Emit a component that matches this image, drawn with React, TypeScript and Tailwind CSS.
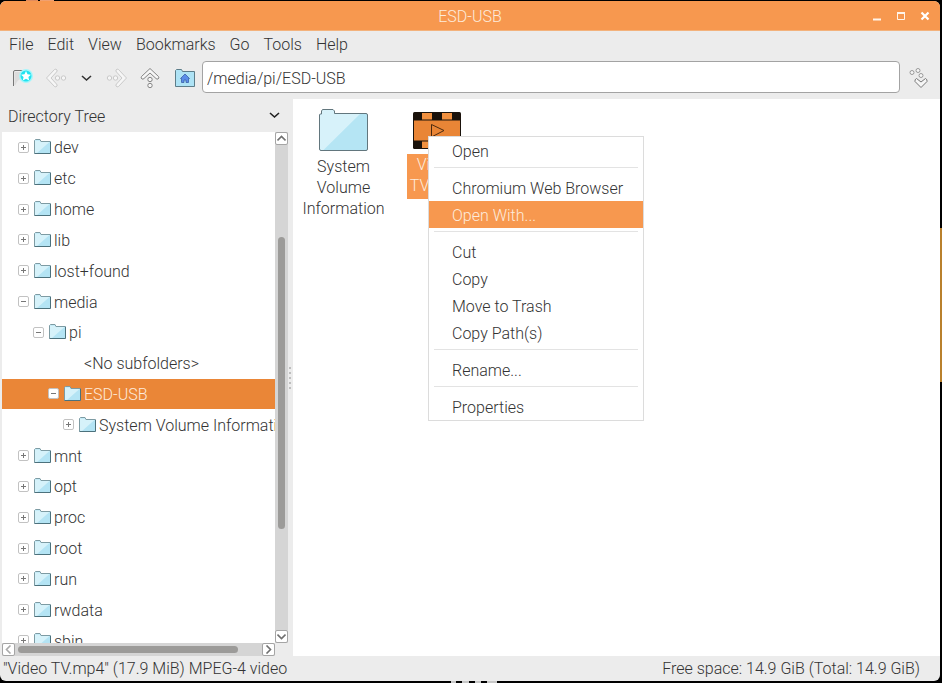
import clsx from 'clsx';
import { useState } from 'react';

type TreeItem = {
  label: string;
  level: number;
  state?: 'open' | 'closed';
};

const tree: TreeItem[] = [
  { label: 'dev', level: 0, state: 'closed' },
  { label: 'etc', level: 0, state: 'closed' },
  { label: 'home', level: 0, state: 'closed' },
  { label: 'lib', level: 0, state: 'closed' },
  { label: 'lost+found', level: 0, state: 'closed' },
  { label: 'media', level: 0, state: 'open' },
  { label: 'pi', level: 1, state: 'open' },
  { label: '<No subfolders>', level: 2 },
  { label: 'ESD-USB', level: 2, state: 'open' },
  { label: 'System Volume Information', level: 3, state: 'closed' },
  { label: 'mnt', level: 0, state: 'closed' },
  { label: 'opt', level: 0, state: 'closed' },
  { label: 'proc', level: 0, state: 'closed' },
  { label: 'root', level: 0, state: 'closed' },
  { label: 'run', level: 0, state: 'closed' },
  { label: 'rwdata', level: 0, state: 'closed' },
  { label: 'sbin', level: 0, state: 'closed' },
];

const indents = ['pl-4', 'pl-[31px]', 'pl-[46px]', 'pl-[61px]'];

const menuGroups = [
  ['Open'],
  ['Chromium Web Browser', 'Open With...'],
  ['Cut', 'Copy', 'Move to Trash', 'Copy Path(s)'],
  ['Rename...'],
  ['Properties'],
];

function SmallFolder() {
  return (
    <svg className="h-4 w-[17px] shrink-0" viewBox="0 0 17 16" fill="none">
      <path d="M.5 14.5V1.5L1.500.5H6L7 2.500H16.500V14.500Z" fill="#b4e4f4" />
      <path d="M1 14V1.500H6L7 3H15.500L3 14Z" fill="#d6f2fa" />
      <path d="M.5 14.500V1.500L1.500.5H6L7 2.500H16" stroke="#7d9ba3" />
      <path d="M16.500 2.500V14.500H.5" stroke="#4c717c" />
    </svg>
  );
}

function BigFolder() {
  return (
    <svg className="h-[43px] w-[49px]" viewBox="0 0 49 43" fill="none">
      <path
        d="M.5 40V6Q.5 5 1.500 5H2.500V2L3.500.5H14L15.500 2V4.500H47Q48.500 4.500 48.500 6V40Q48.500 41.500 47 41.500H2Q.5 41.500.5 40Z"
        fill="#b5e5f4"
      />
      <path d="M1 41V6L3 4.500V1H14.500L15.500 5H41L4 41.500Z" fill="#d7f2fa" />
      <path
        d="M.5 40V6Q.5 5 1.500 5H2.500V2L3.500.5H14L15.500 2V4.500H47Q48.500 4.500 48.500 6V40Q48.500 41.500 47 41.500H2Q.5 41.500.5 40Z"
        stroke="#62767d"
      />
    </svg>
  );
}

function FilmIcon() {
  return (
    <svg className="h-[38px] w-12" viewBox="0 0 48 38" fill="none">
      <rect width="48" height="37" rx="1.500" fill="#1a120b" />
      <path d="M1 8.500H47V28.500H1Z" fill="#e98536" />
      <path d="M9 1H19V7.500H9ZM29 1H39V7.500H29ZM9 29.500H19V36H9ZM29 29.500H39V36H29Z" fill="#f0903f" />
      <path d="M18.500 12.500V25L31 18.500Z" stroke="#4b2a10" />
    </svg>
  );
}

function Expander({ open }: { open: boolean }) {
  return (
    <svg className="h-[11px] w-[11px] shrink-0" viewBox="0 0 11 11" fill="none">
      <rect x=".5" y=".5" width="10" height="10" rx="1.500" fill="#fff" stroke="#c2c2c2" />
      <path d={open ? 'M3 5.500H8' : 'M3 5.500H8M5.500 3V8'} stroke="#777" />
    </svg>
  );
}

function Chevron({ className }: { className?: string }) {
  return (
    <svg className={clsx('h-[7px] w-[11px]', className)} viewBox="0 0 11 7" fill="none">
      <path d="M1 1L5.500 5L10 1" stroke="currentColor" strokeWidth="1.600" />
    </svg>
  );
}

function ScrollButton({ label, turn, dim }: { label: string; turn: string; dim?: boolean }) {
  return (
    <button
      aria-label={label}
      className="flex h-[13px] w-[13px] shrink-0 items-center justify-center rounded-xs border border-[#a5a5a5] bg-white"
    >
      <svg className={clsx('h-[9px] w-[9px]', turn)} viewBox="0 0 9 9" fill="none">
        <path d="M.5 6.500L4.500 2.500L8.500 6.500" stroke={dim ? '#aaa' : '#707070'} strokeWidth="1.600" />
      </svg>
    </button>
  );
}

function DottedArrow({ className }: { className?: string }) {
  return (
    <svg className={clsx('h-[22px] w-[22px]', className)} viewBox="0 0 22 22" fill="none" stroke="currentColor">
      <path
        d="M11 1.500L19.500 9.500Q20.500 11 19 12Q18 12.500 17 11.500L11 6L5 11.500Q4 12.500 3 12Q1.500 11 2.500 9.500Z"
        fill="#f6f6f6"
        strokeLinejoin="round"
      />
      <circle cx="11" cy="12.500" r="2.200" fill="#f6f6f6" />
      <circle cx="11" cy="18.500" r="2.200" fill="#f6f6f6" />
    </svg>
  );
}

function TitleBar() {
  return (
    <header className="flex h-[30px] items-center border-b border-[#f3b27c] bg-[#f7984f] pr-2.5 text-[#fdebdc]">
      <span className="w-[70px]" />
      <h1 className="flex-1 pt-0.5 text-center">ESD-USB</h1>
      <div className="flex w-[60px] items-center justify-end gap-[14px]">
        <button aria-label="Minimize">
          <svg className="h-[10px] w-[10px]" viewBox="0 0 10 10">
            <path d="M1 8.500H9" stroke="#fff4ea" strokeWidth="2" />
          </svg>
        </button>
        <button aria-label="Maximize">
          <svg className="h-[10px] w-[10px]" viewBox="0 0 10 10" fill="none" stroke="#fff4ea">
            <path d="M1.500 1V8.500H8.500V1" />
            <path d="M1 2H9" strokeWidth="2" />
          </svg>
        </button>
        <button aria-label="Close">
          <svg className="h-[10px] w-[10px]" viewBox="0 0 10 10">
            <path d="M1.500 1.500L8.500 8.500M8.500 1.500L1.500 8.500" stroke="#fff" strokeWidth="2.200" />
          </svg>
        </button>
      </div>
    </header>
  );
}

function MenuBar() {
  return (
    <nav className="flex h-[30px] items-center gap-[14px] pb-0.5 pl-[9px]">
      {['File', 'Edit', 'View', 'Bookmarks', 'Go', 'Tools', 'Help'].map((item) => (
        <button key={item}>{item}</button>
      ))}
    </nav>
  );
}

function Toolbar() {
  const [path, setPath] = useState('/media/pi/ESD-USB');
  return (
    <div className="flex h-[38px] items-start pl-3 pr-[9px]">
      <div className="flex h-8 w-[190px] shrink-0 items-center pt-0.5">
        <button aria-label="New tab">
          <svg className="h-[22px] w-[22px]" viewBox="0 0 22 22" fill="none">
            <path d="M1.500 19V5Q1.500 3.500 3 3.500H12" stroke="#777" />
            <path d="M2.500 18V5H12V11Q5 12 3.500 18Z" fill="#dcdcdc" />
            <circle cx="14" cy="9" r="7" fill="#a5f6fb" />
            <circle cx="14" cy="9" r="5.500" fill="#22e3f0" />
            <path d="M14 4L15.500 7.300L19 7.700L16.400 10L17.200 13.500L14 11.800L10.800 13.500L11.600 10L9 7.700L12.500 7.300Z" fill="#fff" />
          </svg>
        </button>
        <button aria-label="Back" className="ml-[11px]">
          <DottedArrow className="-rotate-90 text-[#c9c9c9]" />
        </button>
        <button aria-label="History" className="ml-[14px]">
          <Chevron className="text-[#333]" />
        </button>
        <button aria-label="Forward" className="ml-[14px]">
          <DottedArrow className="rotate-90 text-[#c9c9c9]" />
        </button>
        <button aria-label="Up" className="ml-[11px]">
          <DottedArrow className="text-[#858585]" />
        </button>
        <button aria-label="Home" className="ml-[14px]">
          <svg className="h-[18px] w-5" viewBox="0 0 20 18" fill="none">
            <path d="M.5 17.500V1.500L1.500.5H6.500L7.500 2.500H19.500V17.500Z" fill="#aee3f5" stroke="#5d7d89" />
            <path
              d="M10 5L5.500 9.500H6.500V13.500H9V11H11V13.500H13.500V9.500H14.500Z"
              fill="#5a8de8"
              stroke="#3a5fa8"
              strokeWidth=".8"
            />
          </svg>
        </button>
      </div>
      <input
        aria-label="Location"
        value={path}
        onChange={(e) => setPath(e.target.value)}
        className="h-8 min-w-0 flex-1 rounded-sm border border-[#a3a3a3] bg-white px-1 pt-0.5 outline-none"
      />
      <button aria-label="Go to location" className="ml-[9px] flex h-8 items-center pt-0.5">
        <svg className="h-[22px] w-[22px]" viewBox="0 0 22 22" fill="none" stroke="#999">
          <circle cx="3" cy="5.500" r="2" fill="#f6f6f6" />
          <circle cx="9" cy="3.500" r="2" fill="#f6f6f6" />
          <circle cx="12" cy="8.500" r="2" fill="#f6f6f6" />
          <path
            d="M12 20.500L6 14.500Q5.500 12.500 7.500 11.500L12 15L16.500 11.500Q18.500 12.500 18 14.500Z"
            fill="#f6f6f6"
            stroke="#777"
          />
        </svg>
      </button>
    </div>
  );
}

function DirectoryTree() {
  const [selected, setSelected] = useState('ESD-USB');
  return (
    <aside className="flex w-[287px] shrink-0 flex-col">
      <button className="flex h-[33px] shrink-0 items-center justify-between pl-[7px] pr-2">
        <span className="pt-0.5">Directory Tree</span>
        <Chevron className="text-[#222]" />
      </button>
      <div className="flex min-h-0 flex-1 pl-px">
        <div className="flex min-w-0 flex-1 flex-col">
          <div className="min-h-0 flex-1 overflow-hidden bg-white">
            <ul className="grid h-[524px] auto-rows-fr">
              {tree.map((item) => (
                <li key={item.label}>
                  <button
                    onClick={() => setSelected(item.label)}
                    className={clsx(
                      'flex h-full w-full items-center whitespace-nowrap',
                      indents[item.level],
                      selected === item.label && 'bg-[#ea8637] text-[#fdeadb]'
                    )}
                  >
                    {item.state ? (
                      <>
                        <Expander open={item.state === 'open'} />
                        <span className="ml-[5px] mr-[3px]">
                          <SmallFolder />
                        </span>
                      </>
                    ) : (
                      <span className="w-9 shrink-0" />
                    )}
                    <span className="pt-0.5">{item.label}</span>
                  </button>
                </li>
              ))}
            </ul>
          </div>
          <div className="flex h-[13px] shrink-0 items-center bg-[#d5d5d5]">
            <ScrollButton label="Scroll left" turn="-rotate-90" dim />
            <div className="ml-[3px] h-[7px] w-[220px] rounded-full bg-[#9c9b99]" />
            <span className="flex-1" />
            <ScrollButton label="Scroll right" turn="rotate-90" />
          </div>
        </div>
        <div className="mb-[13px] flex w-[13px] flex-col items-center bg-[#d5d5d5]">
          <ScrollButton label="Scroll up" turn="rotate-0" />
          <div className="mt-[92px] h-[292px] w-[7px] rounded-full bg-[#9c9b99]" />
          <span className="flex-1" />
          <ScrollButton label="Scroll down" turn="rotate-180" />
        </div>
      </div>
    </aside>
  );
}

function Divider() {
  return (
    <div className="flex w-[5px] shrink-0 flex-col items-center justify-center gap-[3px] pr-px">
      {[0, 1, 2, 3, 4].map((dot) => (
        <span key={dot} className="h-[2px] w-[2px] bg-[#bdbdbd]" />
      ))}
    </div>
  );
}

function FilePane() {
  return (
    <main className="flex flex-1 items-start bg-white pl-1 pt-2.5 text-center leading-[21px]">
      <button className="flex w-[93px] flex-col items-center gap-1">
        <BigFolder />
        <span>
          System
          <br />
          Volume
          <br />
          Information
        </span>
      </button>
      <button className="flex w-[93px] flex-col items-center gap-1 pt-[3px]">
        <FilmIcon />
        <span className="bg-[#f7984f] px-[3px] pb-[3px] text-[#fdebdc]">
          Video
          <br />
          TV.mp4
        </span>
      </button>
    </main>
  );
}

function ContextMenu() {
  return (
    <div
      role="menu"
      className="absolute left-[428px] top-[136px] w-[216px] border border-[#dcdcdc] bg-white"
    >
      {menuGroups.map((group, index) => (
        <div key={group[0]}>
          {index > 0 && <div className="mx-[5px] mb-1.5 mt-[3px] h-px bg-[#e3e3e3]" />}
          {group.map((item) => (
            <button
              key={item}
              role="menuitem"
              className={clsx(
                'flex h-[27px] w-full items-center pl-[23px] pt-0.5',
                item === 'Open With...' && 'bg-[#f7984f] text-[#fdebdc]'
              )}
            >
              {item}
            </button>
          ))}
        </div>
      ))}
    </div>
  );
}

// bits of the desktop that stay visible around the window
function Desktop() {
  return (
    <div aria-hidden="true">
      <div className="absolute left-[26px] top-0 h-px w-3 bg-[#e08a5c]" />
      <div className="absolute left-10 top-0 h-px w-[14px] bg-[#f0a070]" />
      <div className="absolute right-0 top-[228px] h-[154px] w-[2px] bg-[#b9802c]" />
      <div className="absolute bottom-0 left-[451px] flex h-[2px] gap-[6px]">
        <span className="w-[5px] bg-[#c8c8c8]" />
        <span className="w-[7px] bg-[#c8c8c8]" />
        <span className="w-[6px] bg-[#c8c8c8]" />
        <span className="w-[10px] bg-[#c8c8c8]" />
      </div>
    </div>
  );
}

export default function App() {
  return (
    <div className="relative flex h-screen flex-col bg-black pb-[2px] pr-[2px] pt-px font-['Roboto',sans-serif] text-base font-light text-[#333]">
      <Desktop />
      <div className="flex min-h-0 flex-1 flex-col overflow-hidden rounded-md bg-[#ececec]">
        <TitleBar />
        <MenuBar />
        <Toolbar />
        <div className="flex min-h-0 flex-1 pl-px">
          <DirectoryTree />
          <Divider />
          <FilePane />
        </div>
        <footer className="flex h-[25px] shrink-0 items-center justify-between pl-[3px] pr-5">
          <span>"Video TV.mp4" (17.9 MiB) MPEG-4 video</span>
          <span>Free space: 14.9 GiB (Total: 14.9 GiB)</span>
        </footer>
      </div>
      <ContextMenu />
    </div>
  );
}
